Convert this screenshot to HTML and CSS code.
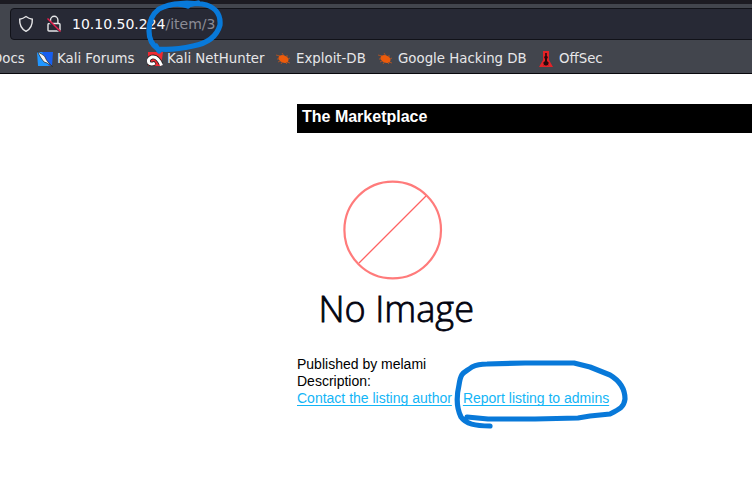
FILE: index.html
```html
<!DOCTYPE html>
<html lang="en">
<head>
<meta charset="utf-8">
<title>The Marketplace</title>
<link rel="stylesheet" href="styles.css">
</head>
<body>
<header class="browser">
  <div class="address">
    <svg class="shield" width="16" height="18" viewBox="0 0 16 18"><path d="M8 1.500 C6 3 4 3.800 1.700 4.200 C1.400 10 3.500 14 8 16.300 C12.500 14 14.600 10 14.300 4.200 C12 3.800 10 3 8 1.500Z"/></svg>
    <svg class="lock" width="16" height="18" viewBox="0 0 16 18"><path d="M3 8.500h10q1 0 1 1v5.500q0 1-1 1H3q-1 0-1-1V9.500q0-1 1-1M4.500 8V5a3.700 3.700 0 0 1 7.400 0v3"/><path class="under" d="M1 4.500l13 12"/><path class="slash" d="M1.500 3.500l13 13"/></svg>
    <span class="url">10.10.50.224<span class="path">/item/3</span></span>
  </div>
  <nav class="bookmarks">
    <span class="bookmark docs">Docs</span>
    <span class="bookmark forums"><svg width="16" height="16" viewBox="0 0 16 16"><path fill="#2196ff" d="M0 1h6l9 14H1z"/><path fill="#175ff0" d="M5 1h11l-1 14h-3z"/><path fill="#f5f5f5" stroke="#222" stroke-width=".7" d="M.5.800l4 2.200 3 2 2 4 1.500 2 4.500 4.500-5.500-3.500-3-1-3-4z"/></svg>Kali Forums</span>
    <span class="bookmark hunter"><svg width="16" height="16" viewBox="0 0 16 16"><path fill="#ef2932" d="M1 1h15l-2 14H1z"/><path fill="none" stroke="#222" stroke-width="4.600" d="M14 13Q10 5 5 6Q0 8 2 12Q4 14 8 12"/><path fill="none" stroke="#fff" stroke-width="3" d="M14.500 14.500Q11 5 5 6Q0 8 2 12Q4 14 8 12"/><path fill="none" stroke="#222" stroke-width=".8" d="M7 10l2 3"/></svg>Kali NetHunter</span>
    <span class="bookmark exploit"><svg width="16" height="16" viewBox="0 0 16 16"><use href="#bug"/></svg>Exploit-DB</span>
    <span class="bookmark google"><svg width="16" height="16" viewBox="0 0 16 16"><g id="bug"><ellipse cx="7.500" cy="8" rx="5.300" ry="3.500" transform="rotate(25 7.500 8)" fill="#ec5b0b"/><path fill="none" stroke="#ec5b0b" stroke-width=".6" d="M0 4l4 1M1 8h4M2 11l4-2M5 13l2-3M6 2l2 3M11 4v4M12 8l2-1M11 11l3 1M9 11l2 2"/></g></svg>Google Hacking DB</span>
    <span class="bookmark offsec"><svg width="16" height="16" viewBox="0 0 16 16"><path fill="#e32227" d="M4 0h6v9l4 7H0l4-7z"/><path fill="#29090c" d="M6.200 2h1.600v3l1.200 1-1 2v2l2 2-1 1 .500 1.500-1.500-.5-1 1-1-1-1.500.5.500-1.500-1-1 2-2V8L5 6l1.200-1z"/></svg>OffSec</span>
  </nav>
</header>
<main class="page">
  <h1 class="title">The Marketplace</h1>
  <svg class="picture" width="196" height="196" viewBox="0 0 196 196"><circle cx="95.700" cy="70" r="48.300"/><path d="M62 103L129 36"/><text x="21.500" y="162" textLength="155.500" lengthAdjust="spacingAndGlyphs">No Image</text></svg>
  <div>Published by melami</div>
  <div>Description:</div>
  <div class="links"><a href="#">Contact the listing author</a><a href="#">Report listing to admins</a></div>
</main>
<svg class="marks" width="752" height="500" viewBox="0 0 752 500">
  <path d="M188 6C180 3 169 4 159 9C151 15 149 22 149 31C149 39 152 45 158 49C168 50 180 49 193 46C209 43 217 36 220 25C221 13 214 6 202 4L187 3L174 4M188 5L198 3M156 46L159 51"/>
  <path d="M490 426C475 426 466 424 461 417C457 409 456 398 459 385C461 371 464 373 472 367Q478 364 487 364L525 363L574 363L590 367L610 375C620 381 625 389 625 399C624 407 620 409 610 414L590 416L578 418L535 419L488 419L467 417"/>
</svg>
</body>
</html>
```
FILE: styles.css
```css
body {
  margin: 0;
  height: 500px;
  overflow: hidden;
  background: #fff;
  color: #000;
  font: 14px/17px "Liberation Sans", sans-serif;
}
.browser {
  box-sizing: border-box;
  height: 74px;
  border-top: 4px solid #1c1b22;
  border-bottom: 1px solid #08080c;
  background: #42454d;
  color: #e7e7e9;
  font: 13.33px/20px "DejaVu Sans", sans-serif;
  overflow: hidden;
}
.address {
  display: flex;
  align-items: center;
  box-sizing: border-box;
  height: 32px;
  margin: 4px -10px 0 10px;
  padding-left: 8px;
  border: 1px solid #111219;
  border-radius: 4px;
  background: #272935;
}
.shield, .lock { fill: none; stroke: #e5e5e7; stroke-width: 1.4; }
.shield { margin-left: -1px; }
.lock { margin-left: 12px; }
.lock .under { stroke: #272935; stroke-width: 2; }
.lock .slash { stroke: #e91e4d; stroke-width: 1.4; }
.url { margin-left: 10px; color: #fbfbfe; font-size: 14px; }
.path { color: #8c8c96; }
.bookmarks { display: flex; height: 28px; margin-top: 7px; }
.bookmark {
  display: flex;
  flex: none;
  align-items: center;
  gap: 4px;
  height: 20px;
  margin-top: 2px;
  white-space: nowrap;
}
.docs { width: 45px; margin-left: -8px; }
.forums { width: 110px; }
.hunter { width: 129px; }
.exploit { width: 102px; }
.google { width: 161px; }
.page { padding: 30px 0 0 297px; }
.title {
  box-sizing: border-box;
  height: 29px;
  margin: 0;
  padding: 4px 5px;
  background: #000;
  color: #fff;
  font-size: 16px;
  line-height: 18px;
}
.picture { display: block; margin: 27px 0 0; }
.picture circle { fill: none; stroke: #ff7b7b; stroke-width: 2.2; }
.picture path { stroke: #ff6262; stroke-width: 1.3; }
.picture text {
  fill: #02030f;
  stroke: #02030f;
  stroke-width: .8;
  font: 300 36px "Open Sans", "Noto Sans", sans-serif;
}
.links { display: flex; gap: 11px; }
.links a { color: #13b5f6; text-underline-offset: 2px; text-decoration-thickness: 1px; text-decoration-skip-ink: none; }
.marks { position: absolute; top: 0; left: 0; pointer-events: none; }
.marks path { fill: none; stroke: #0879d9; stroke-width: 5.2; stroke-linecap: round; stroke-linejoin: round; }
```
